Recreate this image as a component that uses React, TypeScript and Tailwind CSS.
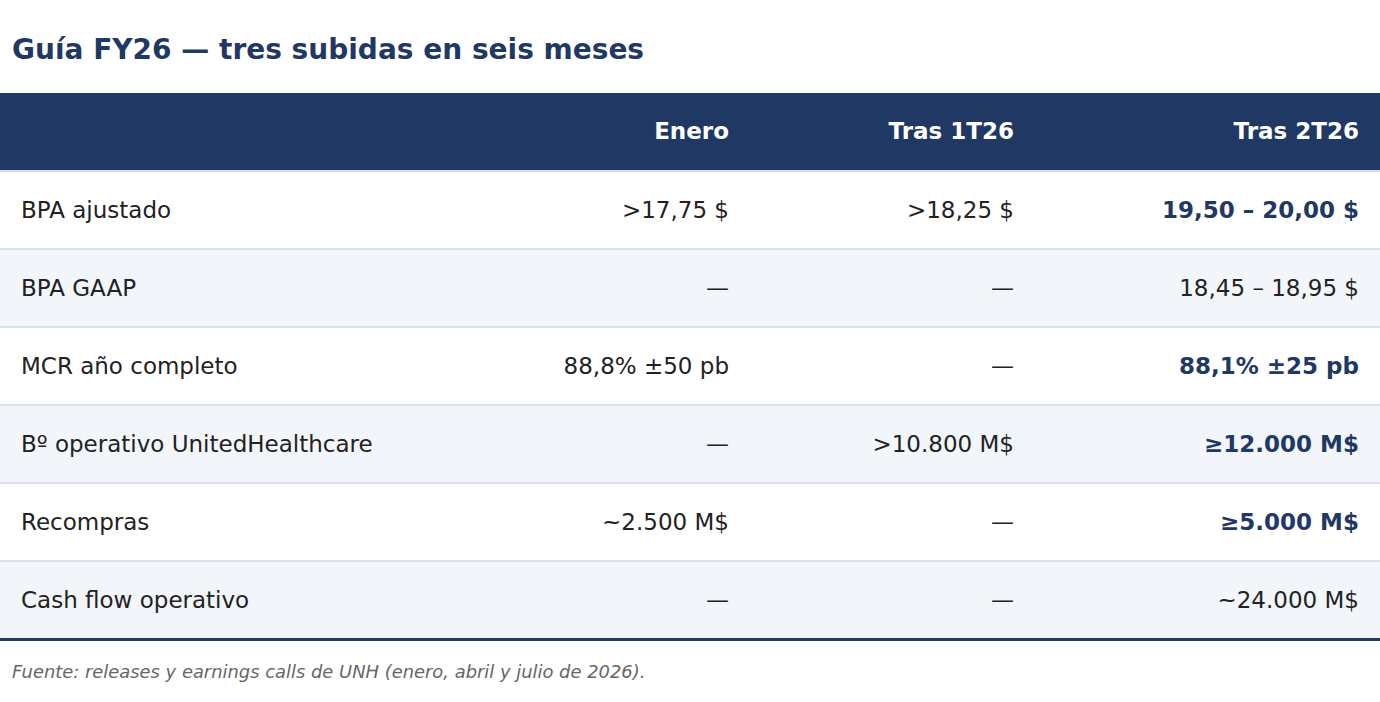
const rows: { label: string; enero: string; t1: string; t2: string; strong?: boolean }[] = [
  { label: "BPA ajustado", enero: ">17,75 $", t1: ">18,25 $", t2: "19,50 – 20,00 $", strong: true },
  { label: "BPA GAAP", enero: "—", t1: "—", t2: "18,45 – 18,95 $" },
  { label: "MCR año completo", enero: "88,8% ±50 pb", t1: "—", t2: "88,1% ±25 pb", strong: true },
  { label: "Bº operativo UnitedHealthcare", enero: "—", t1: ">10.800 M$", t2: "≥12.000 M$", strong: true },
  { label: "Recompras", enero: "~2.500 M$", t1: "—", t2: "≥5.000 M$", strong: true },
  { label: "Cash flow operativo", enero: "—", t1: "—", t2: "~24.000 M$" },
];

export default function App() {
  return (
    <div className="min-h-[702px] bg-white font-['DejaVu_Sans',sans-serif] text-[#222]">
      <h1 className="px-3 pt-[31px] pb-[24px] text-[28px] font-bold leading-[38px] text-[#1f3864]">
        Guía FY26 — tres subidas en seis meses
      </h1>

      <table className="w-full table-fixed border-collapse text-[23px]">
        <colgroup>
          <col className="w-[465px]" />
          <col className="w-[285px]" />
          <col className="w-[285px]" />
          <col className="w-[345px]" />
        </colgroup>
        <thead>
          <tr className="h-[78px] border-b-2 border-[#d5dae6] bg-[#1f3864] text-white">
            <th className="px-[21px]" />
            <th className="px-[21px] text-right font-bold">Enero</th>
            <th className="px-[21px] text-right font-bold">Tras 1T26</th>
            <th className="px-[21px] text-right font-bold">Tras 2T26</th>
          </tr>
        </thead>
        <tbody>
          {rows.map((r, i) => (
            <tr
              key={r.label}
              className={
                (i % 2 === 1 ? "bg-[#f2f5fa] " : "bg-white ") +
                (i === rows.length - 1 ? "h-[78px] border-b-[3px] border-[#1f3864]" : "h-[78px] border-b-2 border-[#dde1ea]")
              }
            >
              <td className="px-[21px] text-left">{r.label}</td>
              <td className="px-[21px] text-right">{r.enero}</td>
              <td className="px-[21px] text-right">{r.t1}</td>
              <td className={r.strong ? "px-[21px] text-right font-bold text-[#1f3864]" : "px-[21px] text-right"}>
                {r.t2}
              </td>
            </tr>
          ))}
        </tbody>
      </table>

      <p className="px-3 pt-[18px] text-[17.9px] italic text-[#666]">
        Fuente: releases y earnings calls de UNH (enero, abril y julio de 2026).
      </p>
    </div>
  );
}
